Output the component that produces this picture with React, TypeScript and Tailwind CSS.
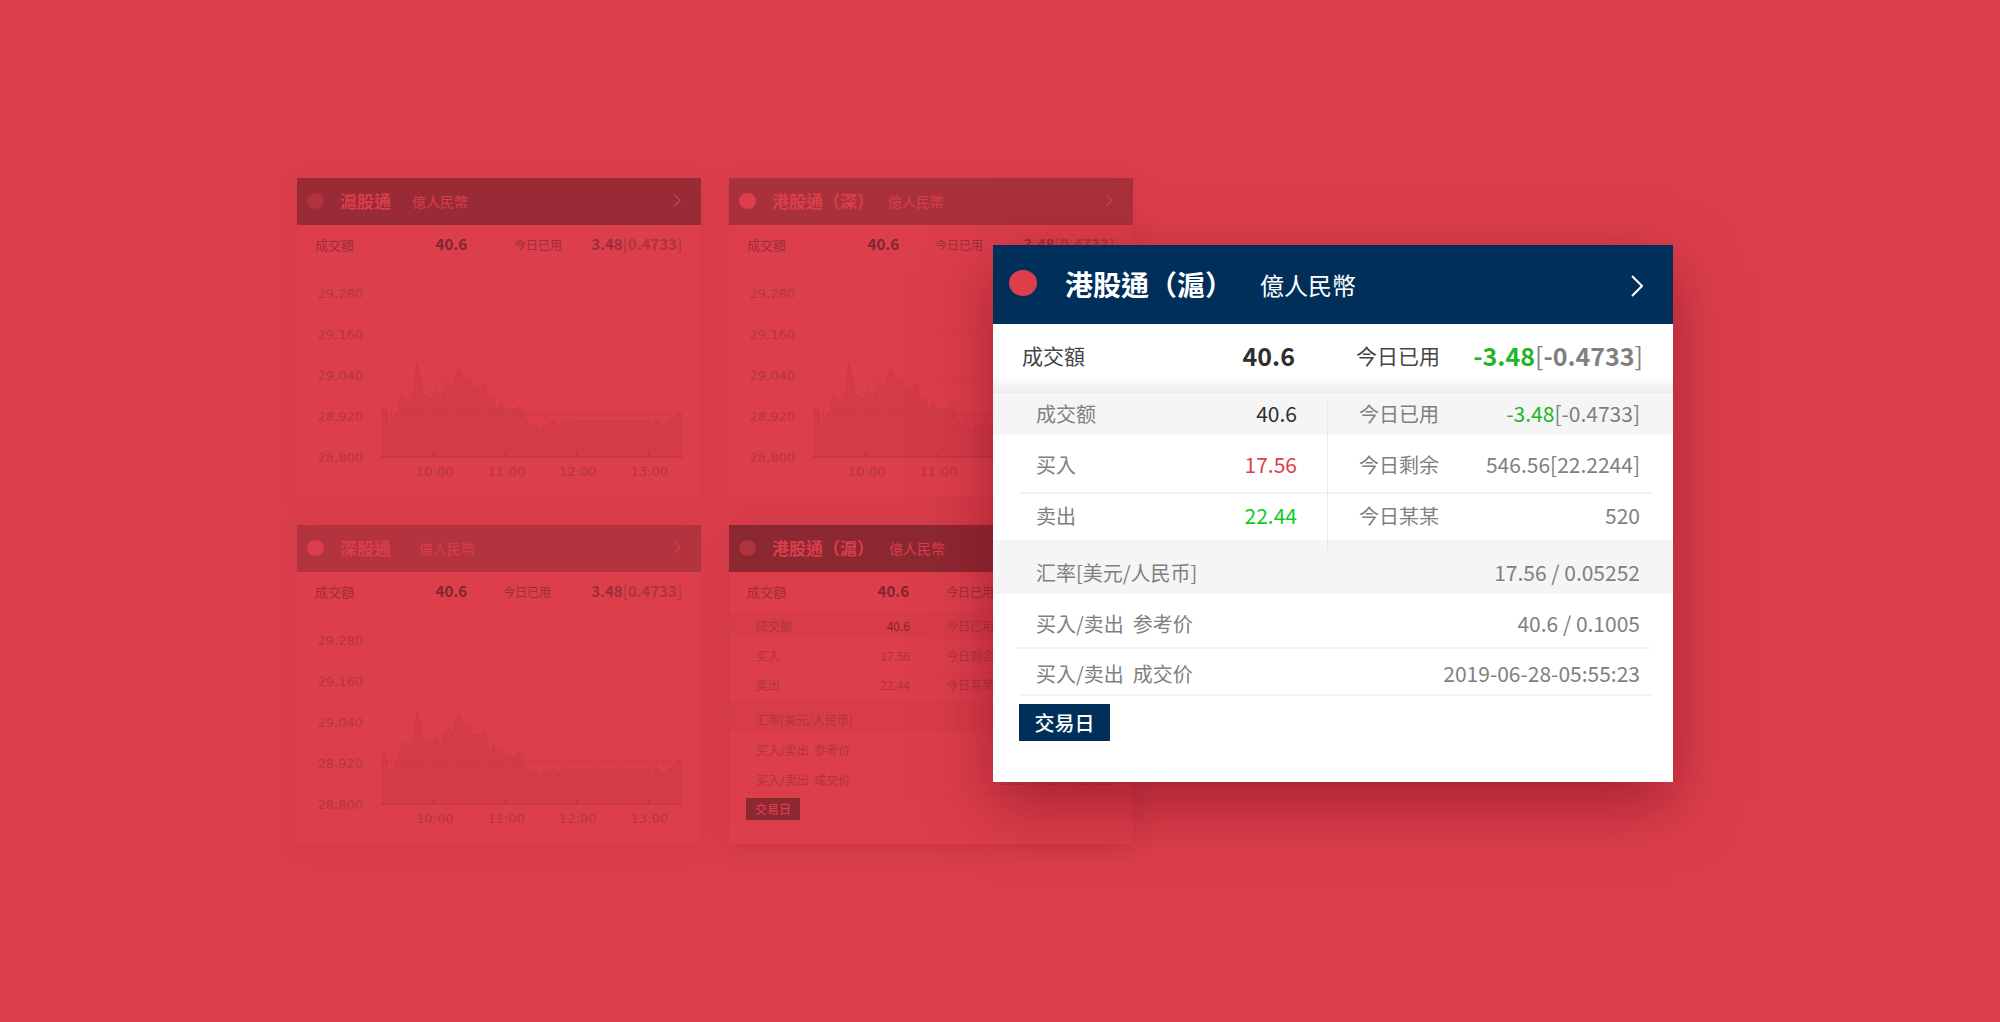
import React from "react";

type Tone = {
  bar: string;
  dot: string;
};

type Row4 = {
  left: string;
  leftValue: string;
  leftTone?: "dark" | "red" | "green";
  right: string;
  rightValue: React.ReactNode;
};

const AREA =
  "M303 762 L308 744 L312 738 L319 748 L322 785 L325 798 L332 790 L340 780 L347 768 L355 756 L360 722 L364 708 L368 704 L373 720 L377 715 L381 728 L385 716 L392 728 L398 702 L403 684 L407 640 L410 612 L414 632 L421 650 L425 664 L428 716 L433 706 L439 706 L446 730 L450 714 L454 724 L458 700 L461 712 L466 698 L470 688 L474 706 L485 716 L490 690 L497 674 L505 664 L513 670 L518 686 L524 662 L530 636 L537 622 L545 636 L550 652 L558 664 L564 664 L570 656 L575 674 L582 692 L589 682 L600 684 L606 674 L618 676 L622 710 L625 730 L635 738 L638 708 L643 718 L648 746 L653 752 L658 736 L664 726 L672 742 L679 760 L684 752 L688 746 L693 746 L698 760 L704 744 L710 752 L718 736 L726 746 L732 768 L737 784 L741 778 L747 814 L754 794 L762 802 L766 788 L771 800 L779 810 L786 797 L800 796 L808 790 L818 784 L830 792 L838 794 L852 784 L858 780 L866 786 L890 784 L1105 784 L1112 790 L1119 797 L1124 792 L1128 776 L1133 788 L1140 788 L1146 796 L1154 803 L1164 784 L1172 784 L1178 772 L1188 768 L1194 756 L1198 766 L1206 766";

function Chevron({ className }: { className: string }) {
  return (
    <svg viewBox="0 0 12 22" fill="none" aria-hidden="true" className={className}>
      <path d="M1 1 L11 11 L1 21" stroke="currentColor" strokeWidth="2" />
    </svg>
  );
}

function SmallHeader({
  title,
  tone,
  unitGap,
}: {
  title: string;
  tone: Tone;
  unitGap: string;
}) {
  return (
    <header className={`flex h-[47px] items-center pb-[2px] pl-[10px] pr-[20px] text-[#d93e4b] ${tone.bar}`}>
      <span className={`h-[16px] w-[17px] rounded-[50%] ${tone.dot}`} />
      <h2 className="ml-4 whitespace-nowrap text-[17px] font-bold leading-6">{title}</h2>
      <span className={`whitespace-nowrap text-[14px] leading-6 ${unitGap}`}>億人民幣</span>
      <button type="button" aria-label={title} className="ml-auto">
        <Chevron className="h-[13px] w-[8px]" />
      </button>
    </header>
  );
}

function SmallStats({ valueWidth, gap, value }: { valueWidth: string; gap: string; value: string }) {
  return (
    <div className="flex h-[39px] items-center pl-[18px] pr-[19px] text-[#9d2e39]">
      <span className="w-[39px] whitespace-nowrap text-[13px]">成交額</span>
      <span className={`text-right text-[15px] font-bold text-[#83252f] ${valueWidth}`}>40.6</span>
      <span className={`whitespace-nowrap text-[12px] ${gap}`}>今日已用</span>
      <span className="ml-auto whitespace-nowrap text-[15px] font-bold">
        {value}
        <span className="text-[#b0343f]">
          <span className="font-normal">[</span>0.4733<span className="font-normal">]</span>
        </span>
      </span>
    </div>
  );
}

function ChartCard({
  title,
  tone,
  unitGap,
  gap,
}: {
  title: string;
  tone: Tone;
  unitGap: string;
  gap: string;
}) {
  return (
    <article className="bg-[#dc3e4b] pb-[15px] shadow-[0_4px_24px_rgba(150,30,50,0.14)]">
      <SmallHeader title={title} tone={tone} unitGap={unitGap} />
      <SmallStats valueWidth="w-[113px]" gap={gap} value="3.48" />
      <div className="mt-5 flex pr-[19px] font-['DejaVu_Sans',sans-serif] text-[13px] text-[#b73640]">
        <div className="flex w-[66px] flex-col gap-[21px] text-right leading-5">
          {["29,280", "29,160", "29,040", "28,920", "28,800"].map((v) => (
            <span key={v}>{v}</span>
          ))}
        </div>
        <svg
          viewBox="303 372 903 522"
          preserveAspectRatio="none"
          className="ml-[18px] h-[174px] min-w-0 flex-1"
          aria-label={title}
        >
          <g stroke="#d93d4a" strokeWidth="3">
            <path d="M303 400H1206M303 524H1206M303 650H1206M303 768H1206" />
          </g>
          <path d={`${AREA} V891 H303 Z`} fill="#d33b48" />
          <path d={AREA} fill="none" stroke="#cd3a46" strokeWidth="3" />
          <path d="M303 763H1206" stroke="#b8353f" strokeWidth="3" strokeDasharray="5 9" />
          <path d="M303 891H1206M461 876V891M676 876V891M891 876V891M1105 876V891" stroke="#b8323e" strokeWidth="3" />
        </svg>
      </div>
      <div className="-mt-[6px] ml-[102px] mr-[16px] grid grid-cols-4 text-center font-['DejaVu_Sans',sans-serif] text-[13px] leading-5 text-[#b73640]">
        {["10:00", "11:00", "12:00", "13:00"].map((v) => (
          <span key={v}>{v}</span>
        ))}
      </div>
    </article>
  );
}

const QUOTES: Row4[] = [
  {
    left: "成交额",
    leftValue: "40.6",
    leftTone: "dark",
    right: "今日已用",
    rightValue: (
      <>
        <span className="text-[#24b527]">-3.48</span>[-0.4733]
      </>
    ),
  },
  { left: "买入", leftValue: "17.56", leftTone: "red", right: "今日剩余", rightValue: "546.56[22.2244]" },
  { left: "卖出", leftValue: "22.44", leftTone: "green", right: "今日某某", rightValue: "520" },
];

const RATES = [
  { label: "汇率[美元/人民币]", value: "17.56 / 0.05252" },
  { label: "买入/卖出  参考价", value: "40.6 / 0.1005" },
  { label: "买入/卖出  成交价", value: "2019-06-28-05:55:23" },
];

const TONES = { dark: "text-[#2f2f2f]", red: "text-[#dd3e4c]", green: "text-[#0bcb1b]" };

const QUOTE_ROWS = [
  "h-[42px] bg-[#f5f5f5]",
  "h-[59px] pt-px after:absolute after:bottom-0 after:left-[26px] after:right-[20px] after:h-[2px] after:bg-[#f3f3f3]",
  "h-[46px] pb-[3px]",
];

const RATE_ROWS = [
  "h-[54px] bg-[#f5f5f5] pt-[12px]",
  "h-[55px] pt-[4px] after:absolute after:bottom-0 after:left-[23px] after:right-[23px] after:h-[2px] after:bg-[#f3f3f3]",
  "h-[47px] pt-[3px] after:absolute after:bottom-0 after:left-[26px] after:right-[20px] after:h-[2px] after:bg-[#f3f3f3]",
];

const SMALL_QUOTE_ROWS = ["h-[27px] bg-[#d83c49] pt-[2px]", "h-[35px] pt-px border-b border-[#d73c49]", "h-[27px] pb-[3px]"];
const SMALL_RATE_ROWS = [
  "h-[32px] bg-[#d83c49] pt-[8px]",
  "h-[32px] pt-[5px] border-b border-[#d73c49]",
  "h-[29px] pt-[3px] border-b border-[#d73c49]",
];

function DimQuoteCard() {
  return (
    <article className="bg-[#dc3e4b] pb-6 shadow-[0_4px_24px_rgba(150,30,50,0.3)]">
      <SmallHeader
        title="港股通（滬）"
        tone={{ bar: "bg-[#8c2832]", dot: "bg-[#b0323d]" }}
        unitGap="ml-[15px]"
      />
      <SmallStats valueWidth="w-[123px]" gap="ml-[37px]" value="3.48" />
      <table className="block text-[12px] text-[#b0343f]">
        <tbody className="block">
          {QUOTES.map((q, i) => (
            <tr key={q.left} className={`flex items-center pl-[27px] pr-[20px] ${SMALL_QUOTE_ROWS[i]}`}>
              <th className="w-[74px] text-left font-normal">{q.left}</th>
              <td className={`w-[80px] text-right ${i === 0 ? "text-[#83252f]" : ""}`}>{q.leftValue}</td>
              <th className="ml-[36px] text-left font-normal">{q.right}</th>
            </tr>
          ))}
        </tbody>
      </table>
      <table className="block text-[12px] text-[#b0343f]">
        <tbody className="block">
          {RATES.map((r, i) => (
            <tr key={r.label} className={`flex items-center justify-between pl-[27px] pr-[20px] ${SMALL_RATE_ROWS[i]}`}>
              <th className="whitespace-pre text-left font-normal">{r.label}</th>
              <td>{r.value}</td>
            </tr>
          ))}
        </tbody>
      </table>
      <button
        type="button"
        className="ml-[17px] mt-[5px] block h-[22px] w-[54px] bg-[#8c2832] text-[12px] font-medium text-[#d93e4b]"
      >
        交易日
      </button>
    </article>
  );
}

function QuotePanel() {
  return (
    <article className="absolute left-[696px] right-0 top-[67px] bg-white pb-[41px] shadow-[0_22px_60px_rgba(120,10,25,0.55)]">
      <header className="flex h-[79px] items-center bg-[#00305a] pl-4 pr-[30px] text-white">
        <span className="mb-[4px] h-[26px] w-[28px] rounded-[50%] bg-[#dd3e4c]" />
        <h1 className="mb-[2px] ml-7 whitespace-nowrap text-[28px] font-bold leading-10">港股通（滬）</h1>
        <span className="ml-[27px] whitespace-nowrap text-[24px] leading-10">億人民幣</span>
        <button type="button" aria-label="港股通（滬）" className="ml-auto mt-[3px]">
          <Chevron className="h-[22px] w-[12px]" />
        </button>
      </header>
      <div className="flex h-[69px] items-center bg-[linear-gradient(to_bottom,#fff_75%,#ececec)] pb-[5px] pl-[29px] pr-[30px] text-[#454545]">
        <span className="w-[100px] whitespace-nowrap text-[21px]">成交額</span>
        <span className="w-[173px] text-right text-[25px] font-bold text-[#2f2f2f]">40.6</span>
        <span className="ml-[61px] whitespace-nowrap text-[21px]">今日已用</span>
        <span className="ml-auto whitespace-nowrap text-[25px] font-bold text-[#808080]">
          <span className="text-[#24b527]">-3.48</span>
          <span className="font-normal">[</span>-0.4733<span className="font-normal">]</span>
        </span>
      </div>
      <div className="relative">
        <table className="block text-[20px] text-[#808080]">
          <tbody className="block">
            {QUOTES.map((q, i) => (
              <tr key={q.left} className={`relative flex items-center pl-[43px] pr-[33px] ${QUOTE_ROWS[i]}`}>
                <th className="w-[110px] text-left font-normal">{q.left}</th>
                <td className={`w-[151px] text-right text-[21px] ${TONES[q.leftTone ?? "dark"]}`}>{q.leftValue}</td>
                <th className="ml-[62px] text-left font-normal">{q.right}</th>
                <td className="ml-auto text-right text-[21px]">{q.rightValue}</td>
              </tr>
            ))}
          </tbody>
        </table>
        <table className="block text-[20px] text-[#808080]">
          <tbody className="block">
            {RATES.map((r, i) => (
              <tr
                key={r.label}
                className={`relative flex items-center justify-between pl-[43px] pr-[33px] ${RATE_ROWS[i]}`}
              >
                <th className="whitespace-pre text-left font-normal">{r.label}</th>
                <td className="text-[21px]">{r.value}</td>
              </tr>
            ))}
          </tbody>
        </table>
        <span className="absolute left-[334px] top-[4px] h-[155px] w-px bg-[#ebebeb]" />
      </div>
      <button
        type="button"
        className="ml-[26px] mt-[8px] block h-[37px] w-[91px] bg-[#00305a] text-[20px] font-medium text-white"
      >
        交易日
      </button>
    </article>
  );
}

export default function App() {
  return (
    <main className="min-h-screen bg-[#dc3f4c] pb-[170px] pl-[297px] pr-[327px] pt-[178px] font-['Noto_Sans_CJK_TC','Noto_Sans_CJK_SC',sans-serif]">
      <div className="relative">
        <section className="mr-[540px] grid grid-cols-2 gap-7">
          <ChartCard
            title="滬股通"
            tone={{ bar: "bg-[#982b35]", dot: "bg-[#af323d]" }}
            unitGap="ml-[21px]"
            gap="ml-[47px]"
          />
          <ChartCard
            title="港股通（深）"
            tone={{ bar: "bg-[#a9313b]", dot: "bg-[#dc3e4b]" }}
            unitGap="ml-[14px]"
            gap="ml-[36px]"
          />
          <ChartCard
            title="深股通"
            tone={{ bar: "bg-[#b3333e]", dot: "bg-[#dc3e4b]" }}
            unitGap="ml-[28px]"
            gap="ml-[36px]"
          />
          <DimQuoteCard />
        </section>
        <QuotePanel />
      </div>
    </main>
  );
}
